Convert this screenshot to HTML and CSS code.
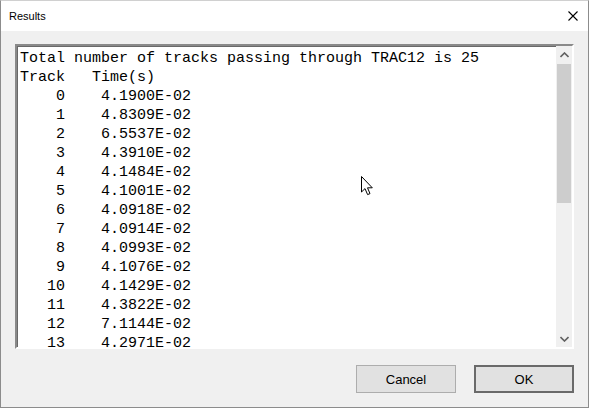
FILE: index.html
```html
<!DOCTYPE html>
<html>
	<head>
		<title>Results</title>
		<link rel="stylesheet" href="styles.css">
	</head>
	<body>
		<div class="window">
			<div class="titlebar">
				<span class="title">Results</span>
				<svg class="close" width="10" height="10" viewBox="0 0 10 10">
					<path d="M0.5 0.5 L9.5 9.5 M9.5 0.5 L0.5 9.5" stroke="#000" stroke-width="1.1" fill="none"/>
				</svg>
			</div>
			<div class="client">
				<div class="listbox">
<pre class="output">Total number of tracks passing through TRAC12 is 25
Track   Time(s)
    0    4.1900E-02
    1    4.8309E-02
    2    6.5537E-02
    3    4.3910E-02
    4    4.1484E-02
    5    4.1001E-02
    6    4.0918E-02
    7    4.0914E-02
    8    4.0993E-02
    9    4.1076E-02
   10    4.1429E-02
   11    4.3822E-02
   12    7.1144E-02
   13    4.2971E-02</pre>
					<div class="scrollbar">
						<div class="arrow">
							<svg width="9" height="6" viewBox="0 0 9 6"><path d="M0.5 5 L4.5 1 L8.5 5" stroke="#606060" stroke-width="1.6" fill="none"/></svg>
						</div>
						<div class="track">
							<div class="thumb"></div>
						</div>
						<div class="arrow">
							<svg width="9" height="6" viewBox="0 0 9 6"><path d="M0.5 1 L4.5 5 L8.5 1" stroke="#606060" stroke-width="1.6" fill="none"/></svg>
						</div>
					</div>
				</div>
				<div class="buttons">
					<button class="btn">Cancel</button>
					<button class="btn default">OK</button>
				</div>
			</div>
		</div>
		<svg class="cursor" width="13" height="20" viewBox="0 0 13 20">
			<path d="M0.5 0.5 L0.5 16 L4 12.6 L6.6 18.6 L9 17.6 L6.5 11.8 L11.3 11.8 Z" fill="#fff" stroke="#000" stroke-width="1"/>
		</svg>
	</body>
</html>
```

FILE: styles.css
```css
body {
	margin: 0;
	background: #ffffff;
	font-family: 'Liberation Sans', Arial, sans-serif;
}

.window {
	width: 587px;
	height: 406px;
	border: 1px solid #8c8c8c;
	border-top-color: #d0d0d0;
	display: flex;
	flex-direction: column;
	background: #f0f0f0;
}

.titlebar {
	height: 30px;
	background: #ffffff;
	display: flex;
	align-items: center;
	justify-content: space-between;
	padding: 0 10px 0 8px;
}
.title {
	font-size: 11px;
	color: #000;
}

.client {
	flex: 1;
	padding: 13px 14px 0 14px;
	display: flex;
	flex-direction: column;
}

.listbox {
	height: 301px;
	border: 2px solid;
	border-color: #8a8a8a #ffffff #ffffff #8a8a8a;
	box-shadow: inset 1px 1px 0 #696969;
	background: #ffffff;
	display: flex;
	overflow: hidden;
}
.output {
	flex: 1;
	margin: 0;
	padding: 3px 0 0 3px;
	font-family: 'Liberation Mono', 'Courier New', monospace;
	font-size: 15px;
	line-height: 19px;
	color: #000;
	overflow: hidden;
}

.scrollbar {
	width: 16px;
	background: #f0f0f0;
	display: flex;
	flex-direction: column;
}
.arrow {
	height: 17px;
	display: flex;
	align-items: center;
	justify-content: center;
}
.track {
	flex: 1;
}
.thumb {
	height: 139px;
	margin: 1px 1px 0 1px;
	background: #cdcdcd;
}

.buttons {
	display: flex;
	justify-content: flex-end;
	gap: 18px;
	margin-top: 16px;
}
.btn {
	width: 100px;
	height: 28px;
	background: #e1e1e1;
	border: 1px solid #adadad;
	font-family: 'Liberation Sans', Arial, sans-serif;
	font-size: 13px;
	color: #000;
	padding: 0;
}
.btn.default {
	border: 2px solid #6a6a6a;
}

.cursor {
	position: absolute;
	left: 361px;
	top: 176px;
}
```
